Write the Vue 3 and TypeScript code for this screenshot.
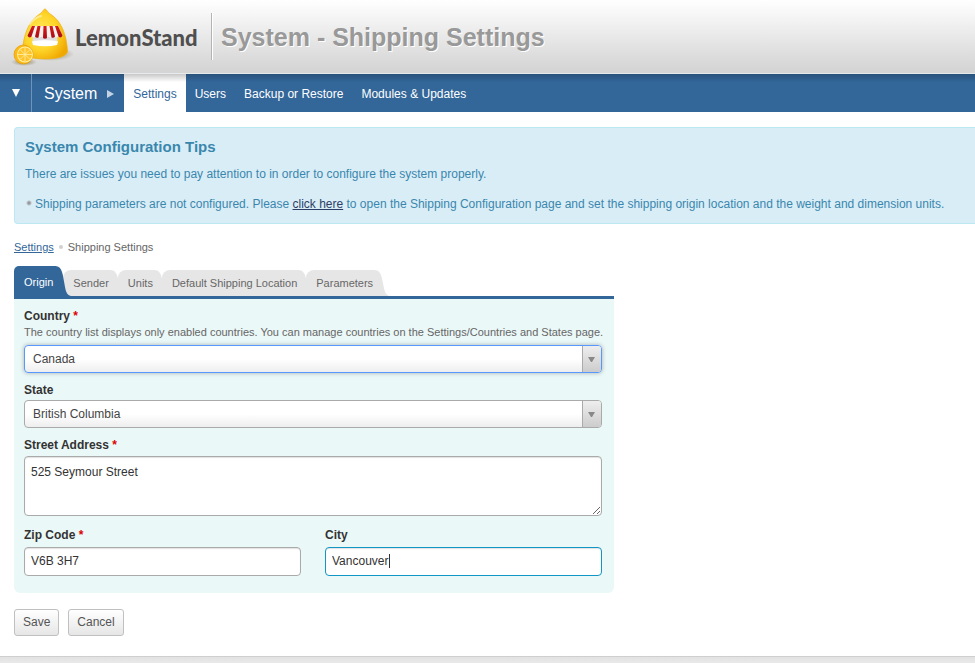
<script setup lang="ts">
import { computed, onMounted, ref } from 'vue'

interface Tab {
  id: string
  label: string
}

const modules: string[] = ['Settings', 'Users', 'Backup or Restore', 'Modules & Updates']
const tabs: Tab[] = [
  { id: 'origin', label: 'Origin' },
  { id: 'sender', label: 'Sender' },
  { id: 'units', label: 'Units' },
  { id: 'default', label: 'Default Shipping Location' },
  { id: 'parameters', label: 'Parameters' },
]

const activeModule = ref('Settings')
const activeTab = ref('origin')
const country = ref('Canada')
const state = ref('British Columbia')
const street = ref('525 Seymour Street')
const zip = ref('V6B 3H7')
const city = ref('Vancouver')
const cityInput = ref<HTMLInputElement | null>(null)

// Steady caret at the end of the city text.
const pen = document.createElement('canvas').getContext('2d')
const caretStyle = computed(() => {
  let width = 0
  if (pen) {
    pen.font = '12px "Liberation Sans", Arial, sans-serif'
    width = Math.ceil(pen.measureText(city.value).width)
  }
  return { backgroundPosition: `${width + 6}px 6px` }
})

onMounted(() => {
  const el = cityInput.value
  if (el) {
    el.focus()
    el.setSelectionRange(el.value.length, el.value.length)
  }
})
</script>

<template>
  <div class="page">
    <header class="header">
      <a class="brand" href="#">
        <svg class="logo" width="64" height="62" viewBox="0 0 64 62" aria-hidden="true">
          <defs>
            <radialGradient id="body" cx="0.4" cy="0.45" r="0.65">
              <stop offset="0" stop-color="#ffe95a" />
              <stop offset="0.55" stop-color="#ffd52a" />
              <stop offset="1" stop-color="#f0a800" />
            </radialGradient>
            <radialGradient id="shade">
              <stop offset="0" stop-color="#6b5a20" stop-opacity="0.65" />
              <stop offset="1" stop-color="#6b5a20" stop-opacity="0" />
            </radialGradient>
            <linearGradient id="counter" x1="0" y1="0" x2="0" y2="1">
              <stop offset="0" stop-color="#c9c9cc" />
              <stop offset="1" stop-color="#f4f4f4" />
            </linearGradient>
            <linearGradient id="red" x1="0" y1="0" x2="0" y2="1">
              <stop offset="0" stop-color="#d81a1a" />
              <stop offset="1" stop-color="#a90d12" />
            </linearGradient>
          </defs>
          <ellipse cx="42" cy="48" rx="22" ry="7" fill="url(#shade)" />
          <ellipse cx="14" cy="56" rx="13" ry="4" fill="url(#shade)" />
          <path d="M35 3C36.500 3 37 6 41 8.500C51 15 56.500 28 57.500 45C57.500 50 48 53 35 53C22 53 12.500 50 12.500 45C13.500 28 19 15 29 8.500C33 6 33.500 3 35 3Z" fill="url(#body)" stroke="#eeb010" stroke-width="0.700" />
          <path d="M20 18C23 13.500 27 11 31 10" stroke="#fff8c8" stroke-width="2" fill="none" stroke-linecap="round" opacity="0.600" />
          <path d="M23 28H47L47.500 37Q35 40 22.500 37Z" fill="url(#counter)" />
          <path d="M22 35.500Q35 33 48 35.500L47 39Q35 41.500 23 39Z" fill="#fff" />
          <path d="M22 20H48L52.500 29.500Q51 33 48.500 30Q46 33.500 43.500 30Q41 33.500 38.500 30.500Q35 34 31.500 30.500Q29 33.500 26.500 30Q24 33.500 21.500 30Q19 33 17.500 29.500Z" fill="#f6f3ef" />
          <g fill="url(#red)">
            <path d="M22 20H25L21.500 30.500Q19 33 17.500 29.500Z" />
            <path d="M27.500 20H30.500L28.500 31.500Q26.500 32.500 25 30.500Z" />
            <path d="M33.500 20H36.500L37 32Q35 33.500 33 32Z" />
            <path d="M39.500 20H42.500L45 30.500Q43.500 32.500 41.500 31.500Z" />
            <path d="M45 20H48L52.500 29.500Q51 33 48.500 30.500Z" />
          </g>
          <circle cx="13.500" cy="48.500" r="9.500" fill="#fdb913" stroke="#e59b07" stroke-width="0.700" />
          <circle cx="15" cy="48.500" r="8" fill="#fff0a8" />
          <circle cx="15" cy="48.500" r="7" fill="#ffc42b" />
          <path d="M15 41.500V55.500M8 48.500H22M10 43.500L20 53.500M20 43.500L10 53.500" stroke="#fff0a8" stroke-width="0.800" />
        </svg>
        <span class="brand-name">LemonStand</span>
      </a>
      <h1 class="title">System - Shipping Settings</h1>
    </header>

    <nav class="nav" aria-label="Main">
      <button class="nav-toggle" type="button" aria-label="Menu">
        <svg width="8" height="8" viewBox="0 0 8 8"><path d="M0 0H8L4 8Z" fill="#fff" /></svg>
      </button>
      <a class="nav-section" href="#">
        System
        <svg width="7" height="8" viewBox="0 0 7 8" aria-hidden="true"><path d="M0 0L7 4L0 8Z" fill="#c3d3e3" /></svg>
      </a>
      <a
        v-for="m in modules"
        :key="m"
        class="nav-item"
        :class="{ active: m === activeModule }"
        href="#"
        @click.prevent="activeModule = m"
      >{{ m }}</a>
    </nav>

    <main class="main">
      <section class="tips">
        <h2>System Configuration Tips</h2>
        <p>There are issues you need to pay attention to in order to configure the system properly.</p>
        <ul>
          <li>
            Shipping parameters are not configured. Please <a href="#">click here</a> to open the Shipping
            Configuration page and set the shipping origin location and the weight and dimension units.
          </li>
        </ul>
      </section>

      <nav class="crumbs" aria-label="Breadcrumb">
        <a href="#">Settings</a>
        <i class="dot"></i>
        <span>Shipping Settings</span>
      </nav>

      <form class="form" @submit.prevent>
        <div class="tabs" role="tablist">
          <button
            v-for="t in tabs"
            :key="t.id"
            type="button"
            role="tab"
            class="tab"
            :class="{ active: t.id === activeTab }"
            :aria-selected="t.id === activeTab"
            @click="activeTab = t.id"
          >
            {{ t.label }}
            <svg class="cap" viewBox="0 0 16 30" preserveAspectRatio="none" aria-hidden="true">
              <path d="M0 0C5 0 7 4 8 10L10 21C11 26 12 29 16 30H0Z" />
            </svg>
          </button>
        </div>

        <div class="panel">
          <div class="field">
            <label for="country">Country <em>*</em></label>
            <p class="hint">
              The country list displays only enabled countries. You can manage countries on the
              Settings/Countries and States page.
            </p>
            <div class="select highlighted">
              <select id="country" v-model="country">
                <option>Canada</option>
                <option>United States</option>
              </select>
              <span class="arrow"><svg width="7" height="5" viewBox="0 0 7 5"><path d="M0 0H7L4 5H3Z" fill="#888" /></svg></span>
            </div>
          </div>

          <div class="field">
            <label for="state">State</label>
            <div class="select">
              <select id="state" v-model="state">
                <option>British Columbia</option>
                <option>Alberta</option>
              </select>
              <span class="arrow"><svg width="7" height="5" viewBox="0 0 7 5"><path d="M0 0H7L4 5H3Z" fill="#888" /></svg></span>
            </div>
          </div>

          <div class="field roomy">
            <label for="street">Street Address <em>*</em></label>
            <textarea id="street" v-model="street" class="text"></textarea>
          </div>

          <div class="pair">
            <div class="field roomy">
              <label for="zip">Zip Code <em>*</em></label>
              <input id="zip" v-model="zip" class="text" type="text" />
            </div>
            <div class="field roomy">
              <label for="city">City</label>
              <input id="city" ref="cityInput" v-model="city" class="text caret" type="text" :style="caretStyle" />
            </div>
          </div>
        </div>

        <div class="actions">
          <button class="btn" type="submit">Save</button>
          <button class="btn" type="button">Cancel</button>
        </div>
      </form>
    </main>
    <footer class="footer"></footer>
  </div>
</template>

<style>
body {
  background: #fff;
}
</style>

<style scoped>
.page {
  display: flex;
  flex-direction: column;
  min-height: 100vh;
  font-family: "Liberation Sans", Arial, sans-serif;
  font-size: 12px;
  line-height: 16px;
  color: #333;
}
.page *,
.page {
  box-sizing: border-box;
}
h1, h2, p, ul {
  margin: 0;
  padding: 0;
}
button, input, select, textarea {
  font: inherit;
  margin: 0;
}

.header {
  display: flex;
  align-items: center;
  height: 74px;
  padding-left: 10px;
  background: linear-gradient(#fff, #d5d5d5 94%);
  border-bottom: 1px solid #e6eaea;
}
.brand {
  display: flex;
  align-items: center;
  text-decoration: none;
}
.brand-name {
  width: 137px;
  padding: 2px 0 0 1px;
  font: 900 22px/30px Lato, sans-serif;
  color: #4f4f4f;
}
.title {
  padding: 2px 0 0 9px;
  border-left: 1px solid #b4b4b4;
  box-shadow: inset 1px 0 #fff;
  font-size: 25px;
  line-height: 45px;
  color: #999;
  text-shadow: 1px 1px #fff;
}

.nav {
  display: flex;
  height: 38px;
  background: linear-gradient(#28527b, #336699 8px);
}
.nav a {
  color: #fff;
  text-decoration: none;
}
.nav-toggle {
  width: 32px;
  padding: 0;
  border: 0;
  border-right: 1px solid #7094b8;
  background: none;
}
.nav-section {
  display: flex;
  align-items: center;
  gap: 10px;
  padding: 2px 10px 0 12px;
  font-size: 16px;
}
.nav-item {
  display: flex;
  align-items: center;
  padding: 2px 9px 0;
}
.nav a.active {
  color: #336699;
  background: linear-gradient(#c8c8c8, #fff 8px);
}

.main {
  flex: 1;
  padding: 15px 0 20px 14px;
}
.tips {
  padding: 9px 0 11px 10px;
  background: #d9edf7;
  border: 1px solid #bce8f1;
  border-right: 0;
  border-radius: 4px 0 0 4px;
  color: #3a87ad;
}
.tips h2 {
  font-size: 15px;
  line-height: 20px;
}
.tips p {
  margin-top: 9px;
}
.tips ul {
  margin-top: 14px;
  list-style: none;
}
.tips li {
  padding-left: 10px;
  background: radial-gradient(circle at 4px 7px, #999 1px, transparent 3px);
}
.tips a {
  color: #2c3e66;
}

.crumbs {
  display: flex;
  align-items: center;
  gap: 5px;
  margin-top: 15px;
  font-size: 11px;
  color: #666;
}
.crumbs a {
  color: #336699;
}
.dot {
  width: 4px;
  height: 4px;
  border-radius: 50%;
  background: #d0d0d0;
}

.form {
  max-width: 600px;
}
.tabs {
  display: flex;
  align-items: flex-end;
  margin-top: 11px;
  border-bottom: 3px solid #336699;
}
.tab {
  position: relative;
  height: 26px;
  padding: 0 9px 0 10px;
  border: 0;
  border-radius: 8px 0 0 0;
  background: linear-gradient(#e6e6e6, #e6e6e6) no-repeat 0 0 / calc(100% - 7px) 100%;
  color: #666;
  fill: #e6e6e6;
  font-size: 11px;
}
.tab.active {
  z-index: 1;
  height: 30px;
  padding: 2px 10px 0;
  border-radius: 5px 0 0 0;
  background-image: linear-gradient(#336699, #336699);
  color: #fff;
  fill: #336699;
}
.cap {
  position: absolute;
  top: 0;
  left: calc(100% - 8px);
  width: 16px;
  height: 100%;
  pointer-events: none;
}

.panel {
  display: flex;
  flex-direction: column;
  gap: 9px;
  padding: 9px 12px 17px 10px;
  background: #ebf8f8;
  border-radius: 0 0 6px 6px;
}
label {
  display: block;
  margin-bottom: 2px;
  font-weight: bold;
}
.roomy label {
  margin-bottom: 3px;
}
label em {
  color: #d00;
  font-style: normal;
}
.hint {
  margin: -2px -12px 5px 0;
  font-size: 11px;
  color: #666;
}
.select {
  position: relative;
  display: flex;
  height: 28px;
  border: 1px solid #aaa;
  border-radius: 4px;
  background: linear-gradient(#fff 50%, #eee);
  overflow: hidden;
}
.select.highlighted {
  border-color: #5897fb;
  box-shadow: 0 0 4px rgba(0, 0, 0, 0.3);
}
.select select {
  flex: 1;
  appearance: none;
  padding: 0 28px 0 8px;
  border: 0;
  outline: 0;
  background: none;
  color: #444;
}
.arrow {
  position: absolute;
  top: 0;
  right: 0;
  bottom: 0;
  display: flex;
  align-items: center;
  justify-content: center;
  width: 19px;
  padding-right: 1px;
  border-left: 1px solid #aaa;
  background: linear-gradient(#eee, #ccc);
  pointer-events: none;
}
.text {
  display: block;
  width: 100%;
  height: 29px;
  padding: 0 6px 1px;
  border: 1px solid #aaa;
  border-radius: 4px;
  outline: 0;
  background: #fff;
  box-shadow: inset 0 1px 1px rgba(0, 0, 0, 0.12);
  color: #333;
}
.text:focus {
  border-color: #1496c4;
}
.caret:focus {
  background-image: linear-gradient(#333, #333);
  background-repeat: no-repeat;
  background-size: 1px 14px;
  caret-color: transparent;
}
textarea.text {
  height: 60px;
  padding: 7px 6px;
}
.pair {
  display: grid;
  grid-template-columns: 1fr 1fr;
  gap: 24px;
  padding-top: 2px;
}
.pair label {
  margin-bottom: 4px;
}

.actions {
  display: flex;
  gap: 9px;
  margin-top: 16px;
}
.btn {
  height: 27px;
  padding: 0 8px 1px;
  border: 1px solid #c0c0c0;
  border-radius: 3px;
  background: linear-gradient(#fff, #e6e6e6);
  color: #555;
}
.footer {
  height: 7px;
  background: linear-gradient(#cfcfcf 1px, #e2e2e2 1px, #e9e9e9);
}
</style>
